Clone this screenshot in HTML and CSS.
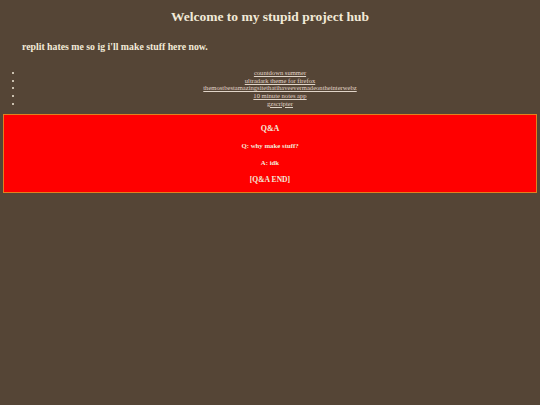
FILE: index.html
```html
<!DOCTYPE html>
<html>
<head>
<meta charset="utf-8">
<title>project hub</title>
<link rel="stylesheet" href="styles.css">
</head>
<body>
<h1 class="title">Welcome to my stupid project hub</h1>
<h2 class="subtitle">replit hates me so ig i'll make stuff here now.</h2>
<ul class="links">
  <li><a href="#">countdown summer</a></li>
  <li><a href="#">ultradark theme for firefox</a></li>
  <li><a href="#">themostbestamazingsitethatihaveevermadeontheinterwebz</a></li>
  <li><a href="#">10 minute notes app</a></li>
  <li><a href="#">gzscripter</a></li>
</ul>
<div class="qa">
  <p class="qa-head">Q&amp;A</p>
  <p class="qa-line">Q: why make stuff?</p>
  <p class="qa-line">A: idk</p>
  <p class="qa-end">[Q&amp;A END]</p>
</div>
</body>
</html>
```
FILE: styles.css
```css
html, body {
  margin: 0;
  background: #554536;
}
body {
  padding: 0 3px;
  font-family: "Liberation Serif", "Times New Roman", serif;
  color: #f2ead8;
}
.title {
  margin: 0;
  padding-top: 7px;
  font-size: 13.5px;
  line-height: 19px;
  text-align: center;
  font-weight: bold;
}
.subtitle {
  margin: 0;
  padding-top: 15px;
  padding-left: 19px;
  font-size: 9.8px;
  line-height: 12px;
  font-weight: bold;
}
.links {
  margin: 0;
  padding: 16px 0 0 20px;
  text-align: center;
  font-size: 6.6px;
  line-height: 7.7px;
}
.links a {
  color: #e0d4c8;
}
.qa {
  margin-top: 6.5px;
  background: #ff0000;
  border: 1px solid #e2801e;
  text-align: center;
  font-weight: bold;
  padding: 8px 0 6px;
}
.qa p {
  margin: 0;
}
.qa-head {
  font-size: 8px;
  line-height: 12px;
}
.qa-line {
  margin-top: 5px !important;
  font-size: 6.8px;
  line-height: 12px;
}
.qa-end {
  margin-top: 5px !important;
  font-size: 7.6px;
  line-height: 12px;
}
```
